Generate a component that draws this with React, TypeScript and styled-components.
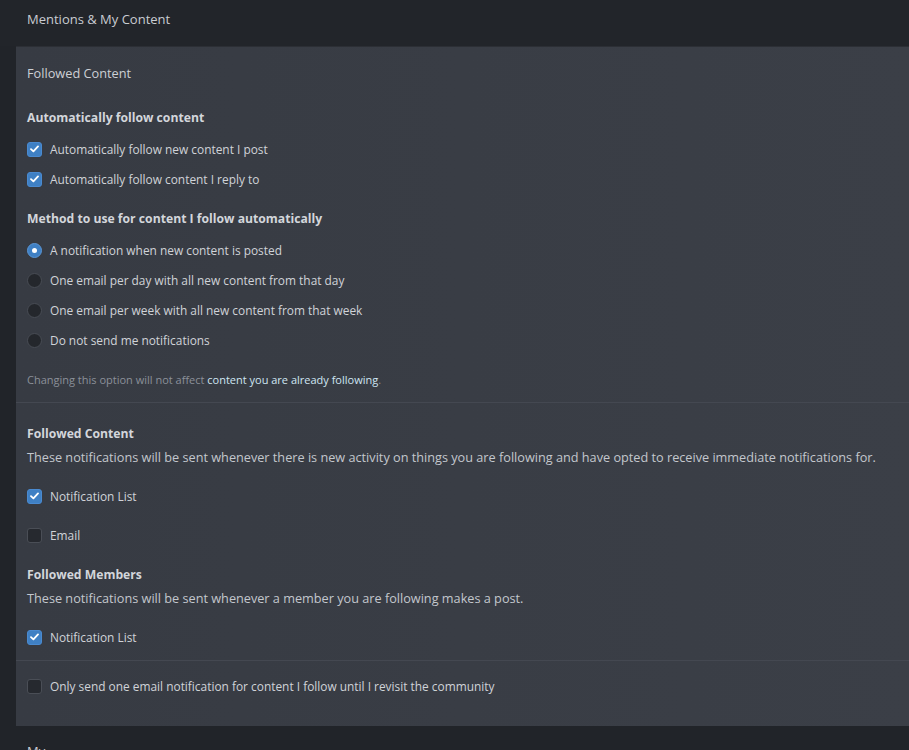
import styled, { createGlobalStyle } from "styled-components";

const GlobalStyle = createGlobalStyle`
  html, body {
    margin: 0;
    padding: 0;
    background: #212429;
  }
  body {
    font-family: "Open Sans", "Noto Sans", sans-serif;
    color: #d2d5da;
  }
`;

const Page = styled.div`
  width: 909px;
  height: 750px;
  overflow: hidden;
  background: #212429;
  display: flex;
  flex-direction: column;
`;

const TopBar = styled.div`
  flex-shrink: 0;
  height: 38px;
  padding-left: 27px;
  display: flex;
  align-items: center;
  font-size: 13px;
  color: #c9ccd2;
  background: #22252a;
  border-bottom: 8px solid #22252a;
`;

const Body = styled.div`
  flex-shrink: 0;
  display: flex;
  padding-left: 16px;
`;

const Panel = styled.section`
  flex: 1;
  height: 680px;
  box-sizing: border-box;
  background: linear-gradient(90deg, #373b43 0%, #3b3f47 100%);
  border-top: 1px solid #2c2f35;
  padding: 16px 0 0 11px;
`;

const PanelTitle = styled.div`
  font-size: 12.75px;
  color: #cdd0d5;
  height: 20px;
  line-height: 20px;
  margin-bottom: 25px;
`;

const Heading = styled.div`
  font-size: 12.2px;
  font-weight: 700;
  color: #d3d6db;
  height: 20px;
  line-height: 20px;
`;

const Desc = styled.div`
  font-size: 12.7px;
  color: #c3c7cd;
  height: 20px;
  line-height: 20px;
  margin-top: 3px;
  white-space: nowrap;
`;

const OptionList = styled.div<{ $gap: number }>`
  display: flex;
  flex-direction: column;
  gap: ${(p) => p.$gap}px;
`;

const Option = styled.label`
  display: flex;
  align-items: center;
  gap: 8px;
  height: 20px;
  font-size: 11.9px;
  color: #d0d3d8;
  white-space: nowrap;
`;

const Box = styled.span<{ $on: boolean }>`
  width: 15px;
  height: 15px;
  flex-shrink: 0;
  box-sizing: border-box;
  border-radius: 3px;
  display: flex;
  align-items: center;
  justify-content: center;
  background: ${(p) => (p.$on ? "#3f80c4" : "#26292f")};
  border: 1px solid ${(p) => (p.$on ? "#4a8ad0" : "#4a4e56")};
`;

const Radio = styled.span<{ $on: boolean }>`
  width: 15px;
  height: 15px;
  flex-shrink: 0;
  box-sizing: border-box;
  border-radius: 50%;
  display: flex;
  align-items: center;
  justify-content: center;
  background: ${(p) => (p.$on ? "#3f80c4" : "#24272c")};
  border: 1px solid ${(p) => (p.$on ? "#5a96d6" : "#484c54")};
  &::after {
    content: "";
    display: ${(p) => (p.$on ? "block" : "none")};
    width: 5px;
    height: 5px;
    border-radius: 50%;
    background: #fff;
  }
`;

const Note = styled.div`
  font-size: 11px;
  color: #8b9099;
  height: 20px;
  line-height: 20px;
  margin-top: 20px;
  a {
    color: #cfe6f3;
    text-decoration: none;
  }
`;

const Divider = styled.hr<{ $top: number; $bottom: number }>`
  border: 0;
  border-top: 1px solid #444851;
  margin: ${(p) => p.$top}px 0 ${(p) => p.$bottom}px -11px;
`;

const Section = styled.div<{ $top: number }>`
  margin-top: ${(p) => p.$top}px;
`;

const Footer = styled.div`
  flex-shrink: 0;
  padding: 16px 0 0 27px;
  font-size: 13px;
  color: #c9ccd2;
`;

const Check = () => (
  <svg width="9" height="8" viewBox="0 0 9 8">
    <path d="M1 4.2 L3.4 6.4 L8 1.4" fill="none" stroke="#fff" strokeWidth="1.8" strokeLinecap="round" strokeLinejoin="round" />
  </svg>
);

const CheckOption = ({ on, label }: { on: boolean; label: string }) => (
  <Option>
    <Box $on={on}>{on && <Check />}</Box>
    {label}
  </Option>
);

const RadioOption = ({ on, label }: { on: boolean; label: string }) => (
  <Option>
    <Radio $on={on} />
    {label}
  </Option>
);

const methods = [
  "A notification when new content is posted",
  "One email per day with all new content from that day",
  "One email per week with all new content from that week",
  "Do not send me notifications",
];

const App = () => {
  return (
    <Page>
      <GlobalStyle />
      <TopBar>Mentions &amp; My Content</TopBar>
      <Body>
        <Panel>
          <PanelTitle>Followed Content</PanelTitle>
          <Heading>Automatically follow content</Heading>
          <Section $top={11}>
            <OptionList $gap={10}>
              <CheckOption on label="Automatically follow new content I post" />
              <CheckOption on label="Automatically follow content I reply to" />
            </OptionList>
          </Section>
          <Section $top={20}>
            <Heading>Method to use for content I follow automatically</Heading>
          </Section>
          <Section $top={11}>
            <OptionList $gap={10}>
              {methods.map((m, i) => (
                <RadioOption key={m} on={i === 0} label={m} />
              ))}
            </OptionList>
          </Section>
          <Note>
            Changing this option will not affect <a href="#">content you are already following</a>.
          </Note>
          <Divider $top={12} $bottom={21} />
          <Heading>Followed Content</Heading>
          <Desc>
            These notifications will be sent whenever there is new activity on things you are following and have opted to receive immediate notifications for.
          </Desc>
          <Section $top={19}>
            <OptionList $gap={19}>
              <CheckOption on label="Notification List" />
              <CheckOption on={false} label="Email" />
            </OptionList>
          </Section>
          <Section $top={20}>
            <Heading>Followed Members</Heading>
            <Desc>These notifications will be sent whenever a member you are following makes a post.</Desc>
          </Section>
          <Section $top={19}>
            <CheckOption on label="Notification List" />
          </Section>
          <Divider $top={13} $bottom={15} />
          <CheckOption on={false} label="Only send one email notification for content I follow until I revisit the community" />
        </Panel>
      </Body>
      <Footer>My</Footer>
    </Page>
  );
};

export default App;
